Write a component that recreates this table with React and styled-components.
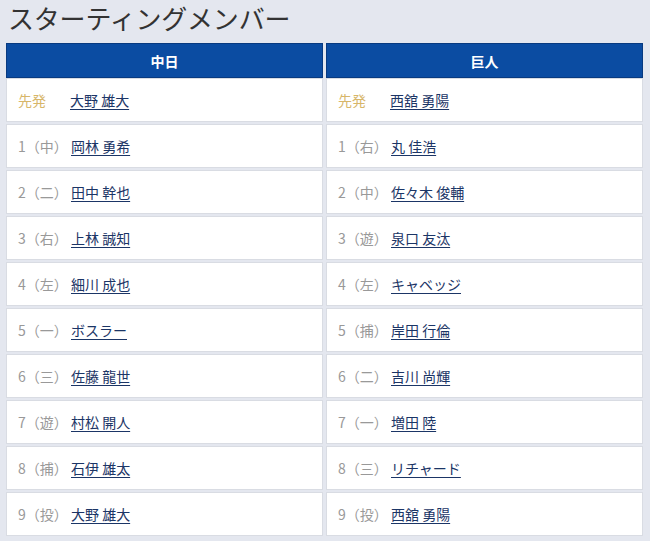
import React from "react";
import styled, { createGlobalStyle } from "styled-components";

const Global = createGlobalStyle`
  html, body { margin: 0; padding: 0; background: #e4e7ef; }
  body { font-family: "Noto Sans CJK JP", "Noto Sans", sans-serif; }
`;

const Page = styled.div`
  width: 650px;
  height: 541px;
  overflow: hidden;
  padding: 0 6px 0 6px;
  box-sizing: border-box;
  background: #e4e7ef;
`;

const Title = styled.h2`
  margin: 0;
  padding: 0 0 0 2px;
  height: 43px;
  line-height: 36px;
  font-size: 26px;
  font-weight: 400;
  color: #333;
  letter-spacing: -0.2px;
`;

const Grid = styled.div`
  display: grid;
  grid-template-columns: 317px 317px;
  column-gap: 3px;
  row-gap: 2px;
`;

const Head = styled.div`
  height: 35px;
  background: #0b4ca2;
  border: 1px solid #083a80;
  box-sizing: border-box;
  color: #fff;
  font-weight: 700;
  font-size: 14px;
  display: flex;
  align-items: center;
  justify-content: center;
  margin-bottom: -2px;
`;

const Cell = styled.div`
  height: 44px;
  background: #fff;
  border: 1px solid #d9dce3;
  box-sizing: border-box;
  display: flex;
  align-items: center;
  padding-left: 11px;
  font-size: 14px;
`;

const Label = styled.span`
  width: ${(p) => (p.$starter ? "52px" : "53px")};
  flex: none;
  color: ${(p) => (p.$starter ? "#d7b66a" : "#999")};
  white-space: nowrap;
  overflow: visible;
`;

const Name = styled.a`
  color: #1b3566;
  text-decoration: underline;
  text-underline-offset: 3px;
  text-decoration-thickness: 1px;
  white-space: nowrap;
`;

const home = [
  ["先発", "大野 雄大"],
  ["1（中）", "岡林 勇希"],
  ["2（二）", "田中 幹也"],
  ["3（右）", "上林 誠知"],
  ["4（左）", "細川 成也"],
  ["5（一）", "ボスラー"],
  ["6（三）", "佐藤 龍世"],
  ["7（遊）", "村松 開人"],
  ["8（捕）", "石伊 雄太"],
  ["9（投）", "大野 雄大"],
];
const away = [
  ["先発", "西舘 勇陽"],
  ["1（右）", "丸 佳浩"],
  ["2（中）", "佐々木 俊輔"],
  ["3（遊）", "泉口 友汰"],
  ["4（左）", "キャベッジ"],
  ["5（捕）", "岸田 行倫"],
  ["6（二）", "吉川 尚輝"],
  ["7（一）", "増田 陸"],
  ["8（三）", "リチャード"],
  ["9（投）", "西舘 勇陽"],
];

function Entry({ label, name }) {
  const starter = label === "先発";
  return (
    <Cell>
      <Label $starter={starter}>{label}</Label>
      <Name href="#">{name}</Name>
    </Cell>
  );
}

export default function App() {
  return (
    <Page>
      <Global />
      <Title>スターティングメンバー</Title>
      <Grid>
        <Head>中日</Head>
        <Head>巨人</Head>
        {home.map((h, i) => (
          <React.Fragment key={i}>
            <Entry label={h[0]} name={h[1]} />
            <Entry label={away[i][0]} name={away[i][1]} />
          </React.Fragment>
        ))}
      </Grid>
    </Page>
  );
}
